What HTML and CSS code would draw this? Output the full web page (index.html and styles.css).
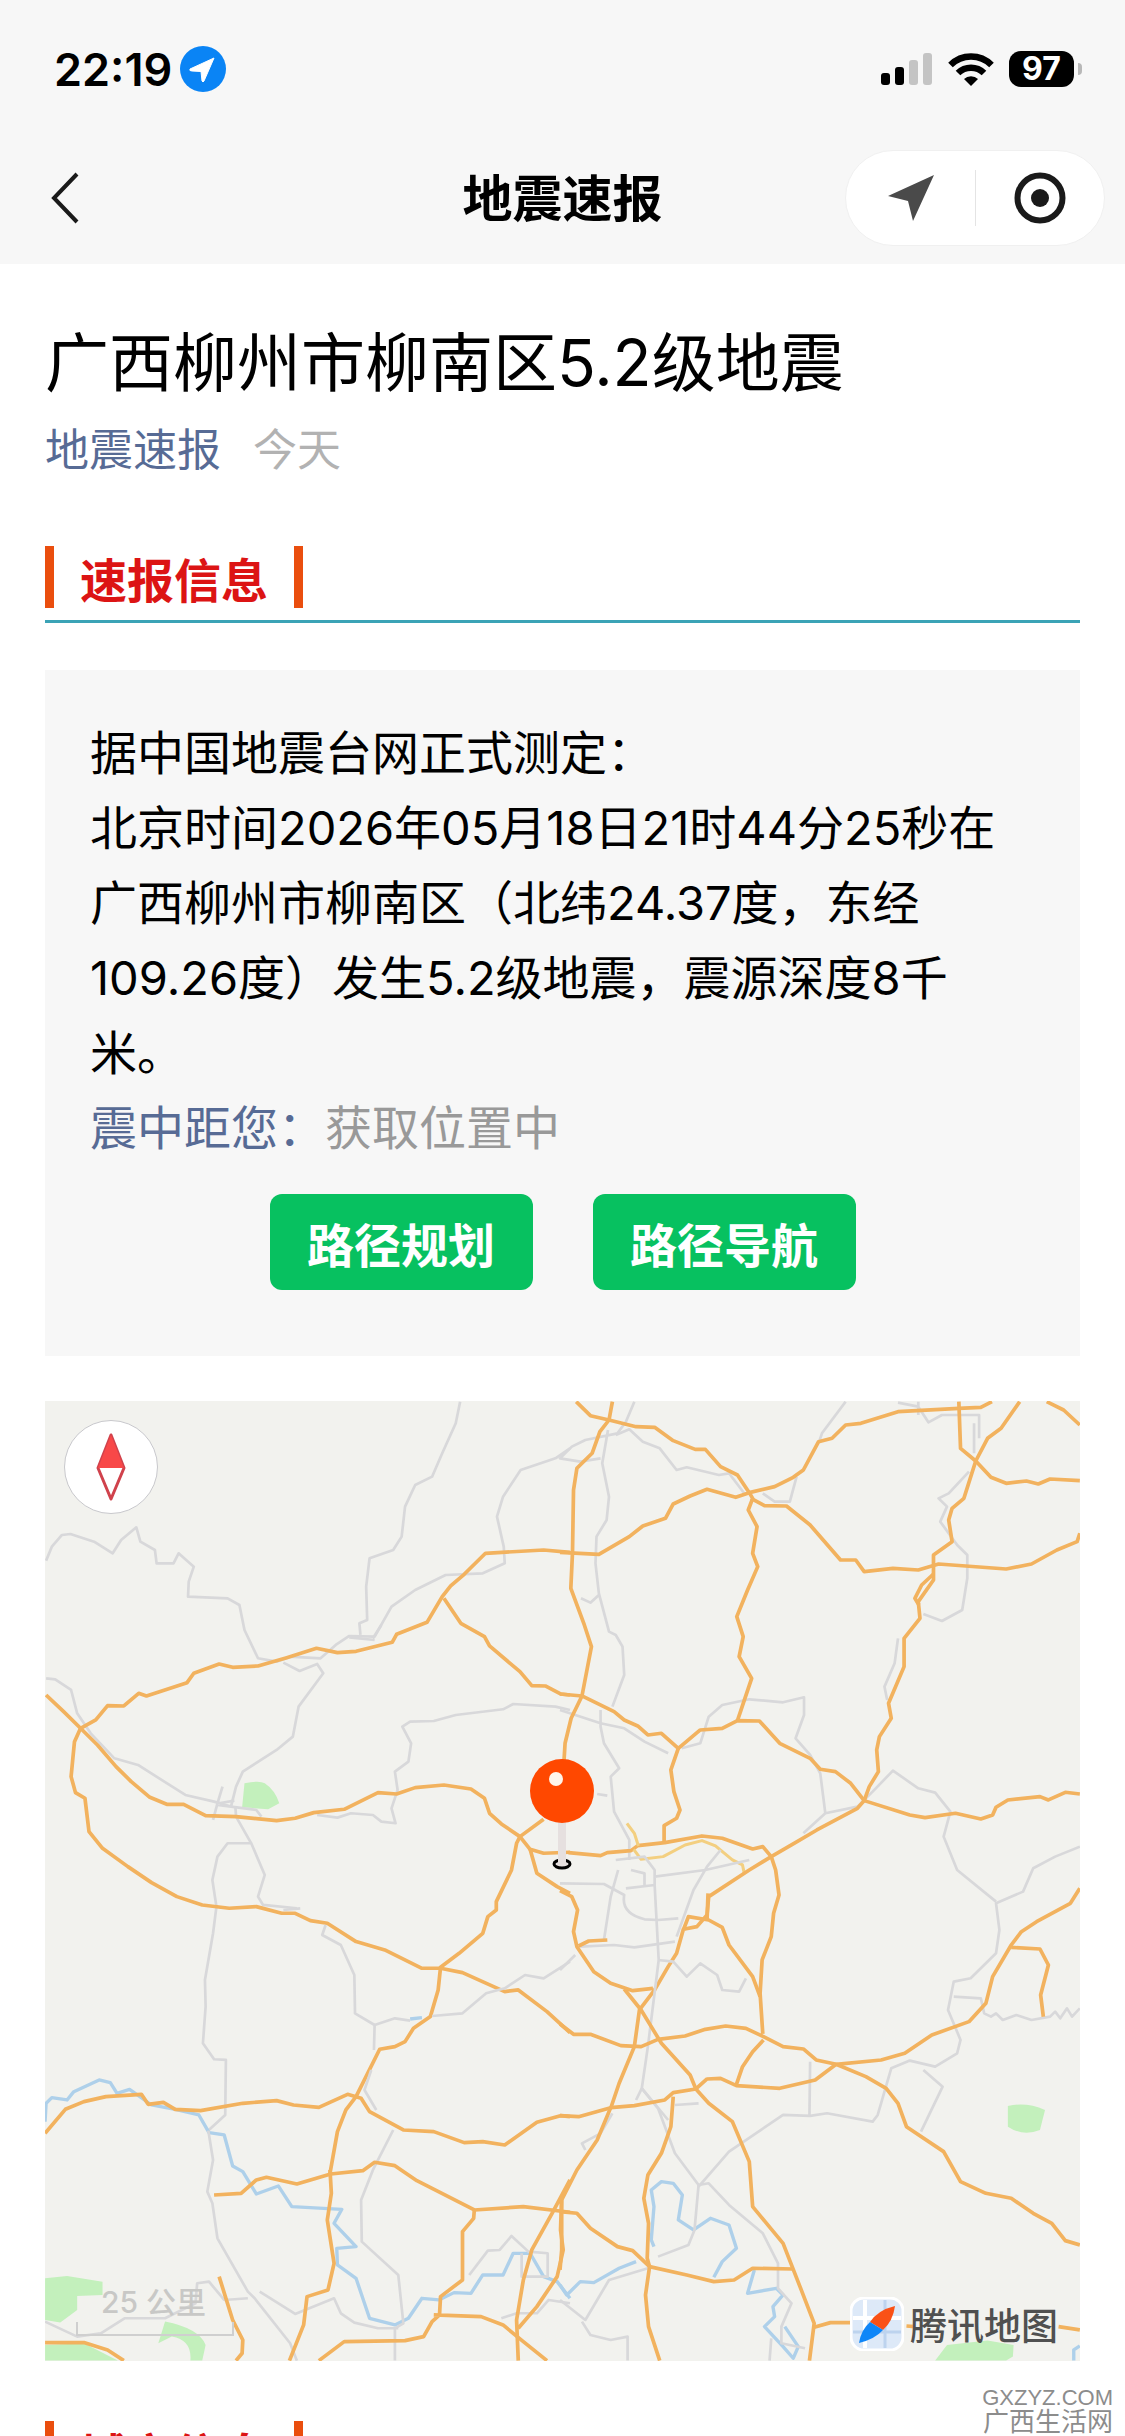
FILE: index.html
```html
<!DOCTYPE html>
<html lang="zh-CN">
<head>
    <meta charset="UTF-8">
    <meta name="viewport" content="width=device-width, initial-scale=1.0">
    <title>地震速报</title>
    <link rel="stylesheet" href="styles.css">
</head>
<body>
    <div class="screen">
        <header class="top">
            <div class="status-bar">
                <div class="status-left">
                    <span class="clock">22:19</span>
                    <svg class="location" viewBox="0 0 46 46">
                        <circle cx="23" cy="23" r="23" fill="#0a84f5"/>
                        <path d="M34 12 L10 23 Q9 25 12 25 L21 25.500 L22 35 Q23 37 24 35 Z" fill="#fff" stroke="#fff" stroke-width="1" stroke-linejoin="round"/>
                    </svg>
                </div>
                <div class="status-right">
                    <svg class="signal" viewBox="0 0 52 33">
                        <rect x="0" y="20" width="9" height="12" rx="3"/>
                        <rect x="14" y="14" width="9" height="18" rx="3"/>
                        <rect x="28" y="7" width="9" height="25" rx="3" fill="#c4c4c4"/>
                        <rect x="42" y="0" width="9" height="32" rx="3" fill="#c4c4c4"/>
                    </svg>
                    <svg class="wifi" viewBox="0 0 46 33">
                        <g fill="none" stroke="#000" stroke-width="6.500">
                            <path d="M2.500 12 A29 29 0 0 1 43.500 12"/>
                            <path d="M10 20 A18.500 18.500 0 0 1 36 20"/>
                        </g>
                        <path d="M16 26 A10 10 0 0 1 30 26 L23 33 Z"/>
                    </svg>
                    <div class="battery"><span>97</span></div>
                </div>
            </div>
            <nav class="nav-bar">
                <button class="back" aria-label="返回">
                    <svg viewBox="0 0 28 52"><path d="M26 2 L3 26 L26 50" fill="none" stroke="#1a1a1a" stroke-width="4"/></svg>
                </button>
                <h1 class="nav-title">地震速报</h1>
                <div class="capsule">
                    <button aria-label="定位">
                        <svg class="arrow" viewBox="0 0 48 48"><path d="M47 1 L1 22 L21 27 L26 47 Z" fill="#4a4a4a"/></svg>
                    </button>
                    <button aria-label="关闭">
                        <svg class="target" viewBox="0 0 52 52">
                            <circle cx="26" cy="26" r="22.500" fill="none" stroke="#1a1a1a" stroke-width="6"/>
                            <circle cx="26" cy="26" r="9" fill="#1a1a1a"/>
                        </svg>
                    </button>
                </div>
            </nav>
        </header>

        <main class="article">
            <h2 class="title">广西柳州市柳南区5.2级地震</h2>
            <div class="meta">
                <a href="#">地震速报</a>
                <span>今天</span>
            </div>

            <h3 class="section-title"><span>速报信息</span></h3>
            <section class="info">
                <p>据中国地震台网正式测定：</p>
                <p>北京时间2026年05月18日21时44分25秒在广西柳州市柳南区（北纬24.37度，东经109.26度）发生5.2级地震，震源深度8千米。</p>
                <p class="distance">震中距您：<span>获取位置中</span></p>
                <div class="actions">
                    <button>路径规划</button>
                    <button>路径导航</button>
                </div>
            </section>

            <section class="map">
                <svg class="map-canvas" viewBox="0 0 1035 960">
                    <!-- north west -->
                    <g transform="translate(-5 -11) scale(.338 .3333)">
                        <path class="park" d="M605 1180 Q650 1170 665 1180 Q695 1200 708 1240 L675 1258 L598 1252 Z"/>
                        <g class="minor">
                            <path d="M18 512 L35 470 L65 435 L90 432 L160 455 L215 490 L240 450 L285 412 L297 455 L340 480 L345 520 L395 520 L410 490 L455 530 L440 575 L438 620 L555 625 L590 645 L605 720 L645 805 L700 815 L740 800 L830 805 L875 765 L915 738 L990 740 L1040 650 L1110 600 L1200 555 L1310 550 L1375 520 L1372 470 L1352 380 L1370 320 L1422 240 L1525 205 L1568 175"/>
                            <path d="M1243 35 L1230 100 L1190 190 L1160 260 L1110 285 L1080 350 L1070 440 L1045 480 L975 505 L965 590 L968 690 L945 700 L948 735"/>
                            <path d="M990 750 L915 742 M985 745 L1010 705"/>
                            <path d="M720 818 L768 843 L820 822 L838 850 L765 950 L748 1040 L700 1080 L600 1145 L580 1190 L565 1250 L525 1245 M18 865 L45 868 L92 900 L110 970 L150 1030 L220 1105 L290 1125 L430 1215 L515 1235 L565 1250 L640 1260 L655 1280"/>
                            <path d="M540 1190 L525 1240 L512 1290 M530 1240 L575 1232 M580 1280 L625 1360 L555 1360 L525 1400 L510 1470 L522 1550 L512 1630 L488 1770 L490 1850 L482 1960 L515 2008 L550 2010 L548 2175 L498 2222 M625 1360 L665 1455 L645 1520 L660 1545 L760 1555 M580 1280 L578 1250"/>
                            <path d="M1568 960 L1525 950 L1400 942 L1370 958 L1230 975 L1165 993 L1095 995 L1072 1010 L1098 1060 L1090 1115 L1050 1145 L1058 1200 L1040 1255 L1052 1300 L1010 1295 L985 1275 L920 1270 L880 1283 L820 1275"/>
                        </g>
                        <g class="road">
                            <path d="M18 915 L70 965 L120 1015 L170 1065 L225 1130 L270 1175 L325 1222 L375 1243 L425 1243 L490 1277 L580 1280 L700 1292 L755 1285 L810 1268 L900 1258 L1000 1208 L1055 1212 L1110 1193 L1195 1185 L1275 1197 L1315 1225 L1330 1270 L1365 1302 L1420 1340 L1450 1378 L1490 1390 L1568 1387"/>
                            <path d="M120 1015 L165 990 L200 947 L248 948 L292 910 L315 918 L435 878 L455 850 L530 822 L570 832 L645 828 L730 803 L818 775 L880 788 L935 784 L1042 757 L1055 733 L1145 697 L1190 620 L1215 588 L1255 553 L1318 490 L1490 480 L1568 487"/>
                            <path d="M1195 625 L1245 700 L1315 740 L1330 768 L1420 845 L1455 887 L1495 888 L1540 912 L1568 915"/>
                            <path d="M120 1015 L102 1055 L92 1160 L105 1208 L133 1225 L145 1325 L185 1375 L260 1430 L330 1478 L405 1520 L480 1545 L560 1555 L640 1550 L715 1570 L755 1570 L800 1592 L850 1600 L935 1655 L1020 1680 L1130 1735 L1185 1735 L1250 1748 L1375 1805 L1415 1800 L1500 1865 L1568 1928"/>
                            <path d="M1490 1288 L1420 1340 L1410 1360 L1395 1440 L1350 1535 L1350 1560 L1325 1580 L1310 1630 L1240 1690 L1185 1732 L1178 1800 L1155 1880 L1105 1915 L1080 1955 L1050 1970 L1005 1978 L935 2120 L905 2160 L880 2225 L858 2350"/>
                            <path d="M1450 1378 L1470 1450 L1530 1490 L1568 1510"/>
                        </g>
                    </g>
                    <!-- north east -->
                    <g transform="translate(515 -11) scale(.338 .3333)">
                        <g class="minor">
                            <path d="M220 35 L195 95 L170 130 L75 150 L35 170 L0 205 L60 215 L120 205 M142 120 L125 220 L145 320 L138 390 L108 440 L105 520 L115 610 L145 725 L165 735 L185 770 L190 855 L155 950 M115 615 L90 638 L62 625"/>
                            <path d="M165 135 L205 118 L245 155 L295 175 L345 240 L375 232 L470 255 L500 250 L545 310 M600 310 L635 335 L680 335 L700 260 M845 35 L775 130 L765 160"/>
                            <path d="M1000 38 L1060 50 L1090 97 L1130 75 L1240 75 L1240 145 M1225 100 L1225 190 M1060 35 L1060 75 M1210 245 L1150 310 L1120 325 L1145 350 L1125 395 L1175 465 L1205 495 L1205 565 L1190 660 L1130 693 L1075 672 M1000 745 L990 820 L960 890 L968 930"/>
                            <path d="M0 960 L120 1000 L190 1015 L250 1055 L320 1090 M120 960 L120 1010 L130 1060 L175 1135 L150 1160 L160 1265 L205 1350 L205 1410 M110 1212 L140 1217"/>
                            <path d="M360 1075 L415 1060 L440 980 L480 945 L560 928 L660 937 L722 922 L722 975 L697 1045 L740 1095 L770 1150 L785 1270 L720 1330 M785 1270 L880 1250 L925 1205 L985 1142 L1060 1195 L1110 1208 L1155 1265 L1135 1340 L1175 1440 L1290 1535 M1538 1370 L1465 1400 L1400 1435 L1370 1505 L1290 1540 L1300 1620 L1290 1690 L1215 1765 L1165 1775 L1148 1860 L1185 1950 L1175 1990 L1110 2030 L1035 2012 L980 2035 L940 2175 L925 2195 L790 2170 L740 2178 L660 2175 L500 2285 L410 2390"/>
                        </g>
                        <g class="road">
                            <path d="M48 35 L90 77 L145 90 L225 110 L280 112 L335 152 L400 178 L430 178 L475 230 L525 255 L560 308 L520 322 L435 298 L385 318 L335 342 L312 385 L245 408 L205 440 L115 493 L0 487"/>
                            <path d="M155 35 L145 90 L118 125 L95 190 L50 235 L40 300 L37 487 L32 595 L72 705 L93 770 L65 918 L33 985 L15 1060 L12 1110"/>
                            <path d="M560 308 L570 325 L557 360 L583 410 L570 490 L585 530 L555 600 L523 680 L542 740 L530 800 L567 865 L525 992"/>
                            <path d="M560 308 L635 290 L690 262 L720 240 L765 155 L805 145 L845 105 L890 100 L1000 65 L1180 55 L1245 52 L1278 35"/>
                            <path d="M565 325 L605 347 L670 348 L740 405 L830 510 L875 510 L900 545 L985 535 L1060 540 L1120 522 L1320 537 L1395 522 L1470 480 L1530 455 L1538 430"/>
                            <path d="M1180 35 L1185 175 L1230 213 L1275 262 L1320 280 L1380 273 L1415 282 L1450 267 L1538 272"/>
                            <path d="M1360 35 L1305 115 L1265 145 L1230 213 L1195 325 L1160 355 L1150 390 L1160 455 L1105 495 L1105 570 L1060 635 L1065 685 L1018 745 L1018 830 L972 940 L980 985 L945 1040 L937 1080 L942 1145 L915 1190 L900 1232"/>
                            <path d="M1105 552 L1070 585 L1050 625 L1062 645 M1440 35 L1490 60 L1538 105"/>
                            <path d="M0 912 L65 918 L160 965 L190 990 L230 1008 L260 1035 L300 1030 L350 1075 L415 1020 L480 1015 L525 992 L590 993 L650 1060 L740 1105 L770 1138 L815 1145 L860 1180 L900 1232 L1035 1275 L1080 1283 L1170 1270 L1245 1287 L1280 1275 L1290 1252 L1325 1230 L1420 1220 L1445 1230 L1495 1207 L1538 1212"/>
                            <path d="M350 1075 L328 1140 L337 1205 L355 1260 L345 1285 L308 1307 L308 1358"/>
                            <path d="M25 1388 L120 1397 L140 1388 L210 1382 L230 1367 L310 1358 L420 1338 L480 1345 L570 1377 L600 1370 L625 1400 L690 1362 L760 1320 L880 1255 L900 1232 M625 1400 L638 1440 L648 1515 L632 1570 L625 1640 L598 1710 L592 1810 L600 1932"/>
                        </g>
                        <path class="road-light" d="M198 1300 L220 1330 L232 1368 M218 1378 L240 1408 L305 1400 L370 1365 L420 1352 L460 1368 L510 1410 L540 1425 L545 1450"/>
                        <path class="road" d="M625 1400 L560 1440 L440 1520 L435 1575 L405 1610 L365 1618 L345 1690 L320 1730 L280 1800 L235 1860 L220 1970 L175 2080 L150 2155"/>
                    </g>
                    <!-- south west -->
                    <g transform="translate(-5 469) scale(.338 .3333)">
                        <path class="park" d="M15 1225 L80 1218 L185 1235 L185 1275 L110 1278 L110 1320 L60 1358 L15 1350 Z M15 1425 L130 1420 L230 1472 L15 1472 Z M370 1355 Q470 1375 490 1425 L480 1472 L445 1472 Q450 1410 390 1400 L350 1420 Z"/>
                        <path class="water" d="M15 755 L18 700 L35 683 L80 690 L100 665 L175 630 L208 638 L228 670 L265 658 L330 705 L400 718 L470 735 L500 788 L545 795 L570 888 L600 905 L640 972 L705 948 L745 1010 L893 1018 L870 1060 L935 1130 L878 1135 L880 1185 L935 1225 L975 1345 L1050 1365 L1090 1345 L1130 1285 L1180 1290 L1225 1268 L1275 1270 L1310 1215 L1370 1215 L1400 1150 L1450 1150 L1490 1220 L1530 1235 L1568 1285 M1095 447 L1130 443"/>
                        <g class="minor">
                            <path d="M720 120 L770 115 M845 165 L835 195 L890 225 L930 315 L932 430 L990 465 L988 540 M990 465 L1050 445 L1095 452 M1160 438 L1250 430 L1320 370 L1375 355 L1435 315 L1490 325 L1568 275 M980 600 L960 660 L995 720 M1045 780 L985 900 L950 990 L952 1115 L1060 1215 L1075 1360 L1050 1375 L1050 1472"/>
                            <path d="M498 782 L512 870 L495 965 L510 1000 L525 1105 L615 1265 L635 1285 L740 1420 L760 1472 M615 1285 L545 1290 L500 1235 L465 1240 L460 1300 L370 1345 L250 1345 L180 1390 L110 1400 L15 1355 M650 1265 L755 1332 L870 1285 L890 1330 L930 1358 L1000 1375 L1060 1375"/>
                            <path d="M1270 1215 L1325 1142 L1360 1140 L1395 1098 L1445 1145 L1502 1150 L1502 1220 L1425 1220 L1425 1150 M1365 1345 L1410 1330 L1470 1330 L1505 1290 L1568 1300"/>
                        </g>
                        <g class="road">
                            <path d="M15 790 L75 718 L130 695 L195 680 L300 673 L320 703 L365 697 L400 718 L475 722 L600 700 L700 692 L750 705 L825 712 L910 673 L950 685 L975 725 L1075 780 L1165 785 L1255 818 L1310 815 L1375 825 L1470 757 L1540 737 L1568 740"/>
                            <path d="M515 975 L595 970 L640 930 L670 922 L760 942 L860 912 L955 902 L990 877 L1050 887 L1115 932 L1285 1020 L1430 1010 L1568 1027"/>
                            <path d="M858 900 L862 970 L850 1050 L870 1180 L852 1260 L790 1280 L780 1365 L738 1472"/>
                            <path d="M1285 1020 L1283 1045 L1250 1085 L1250 1230 L1185 1280 L1182 1335 L1160 1355 L1135 1400 L1080 1412 L900 1415 L825 1472 M1165 1335 L1305 1340 L1370 1365 L1430 1415 L1500 1472"/>
                            <path d="M530 1220 L570 1350 L600 1410 L598 1450 L580 1472 M15 1418 L130 1418 L200 1440 L248 1472"/>
                            <path d="M1568 930 L1515 1030 L1455 1140 L1430 1230 L1410 1350 L1415 1472 M1543 990 L1540 1080 L1548 1140 L1530 1220 L1470 1310 L1415 1375"/>
                        </g>
                    </g>
                    <!-- south east -->
                    <g transform="translate(515 469) scale(.338 .3333)">
                        <path class="park" d="M1325 708 Q1380 695 1435 720 L1420 780 Q1370 800 1325 770 Z M1110 1472 L1145 1425 L1265 1412 L1342 1425 L1340 1460 L1320 1472 Z"/>
                        <path class="water" d="M278 1130 L270 1110 L278 1010 L270 960 L300 935 L335 940 L362 975 L350 1050 L395 1080 L445 1045 L500 1065 L522 1135 L480 1175 L455 1222 M0 1245 L20 1275 L60 1235 L100 1238 L175 1195 L225 1175 M575 1200 L555 1270 L640 1255 L660 1275 L630 1310 L635 1340 L605 1370 L660 1430 L690 1465 L705 1430 L665 1370 M1538 1428 L1520 1440 L1520 1472"/>
                        <g class="minor">
                            <path d="M0 40 L130 42 L190 75 Q180 130 250 148 L290 150 L350 145 M172 0 L150 80 L130 210 M165 -30 L250 -40 L280 0 L280 45 L195 55 M210 0 L250 10 L250 45 M280 20 L430 0 L560 -30 M475 -60 L435 -10 L395 60 L345 200 M280 45 L292 270 L260 530 L242 655 L290 715 L340 850 L410 945 L440 940 L500 1005 L600 1090 L645 1180 L645 1255 L685 1300 L655 1370 L655 1420 L725 1435"/>
                            <path d="M60 230 L160 225 L220 232 L340 215 M45 255 L0 300 M290 270 L335 275 L375 320 L415 280 L465 315 L480 360 L530 365 L550 325 M242 655 L320 750 M340 705 L410 700 M242 655 L225 690 M155 730 L120 790 L65 820 L75 840 M740 575 L738 740 M410 945 L398 1080 L380 1125 L290 1160 M1165 380 L1245 385 L1255 430 L1275 440 L1290 430 L1310 450 L1350 435 L1395 450 L1450 440 L1465 425 L1480 445 L1500 415 L1515 440 L1538 415"/>
                            <path d="M1075 600 L1132 650 L1068 785"/>
                            <path d="M260 1195 L145 1230 L75 1350 L0 1290 M65 1355 L90 1395 L150 1410 L200 1400 L200 1472 M620 1472 L625 1405"/>
                        </g>
                        <g class="road">
                            <path d="M0 62 L35 80 L52 120 L40 185 L50 230 L100 305 L150 340 L215 362 L275 355"/>
                            <path d="M190 357 L240 420 L300 520 L385 615 L402 657 L440 700 L510 755 L560 875 L570 1010 L660 1120 L710 1250 L752 1360 L738 1472"/>
                            <path d="M55 228 L85 213 L140 210 M365 180 L380 140 L440 150 L480 172 L500 225 L570 320 L592 380 M435 150 L438 70"/>
                            <path d="M0 462 L40 493 L90 493 L180 527 L240 530 L290 508 L370 498 L430 478 L490 468 L550 475 L602 500 L660 530 L720 537 L758 570 L817 583"/>
                            <path d="M602 510 L570 545 L540 590 L522 643"/>
                            <path d="M0 737 L55 740 L150 713 L220 707 L310 690 L335 668 L402 657 L435 627 L475 625 L522 647 L650 655 L755 630 L817 583 L950 570 L1020 550 L1100 495 L1210 455 L1260 400 L1280 320 L1335 225 L1365 185 L1410 155 L1510 100 L1538 55"/>
                            <path d="M1335 232 L1420 237 L1445 285 L1422 375 L1430 440 M817 583 L905 620 L965 655 L1000 700 L1025 770 L1135 845 L1185 935 L1260 970 L1335 985 L1400 1030 L1455 1060 L1495 1112 L1538 1125"/>
                            <path d="M150 713 L110 810 L50 900 L0 1000 M5 990 L5 1140 L0 1200 M335 680 L328 770 L300 850 L260 915 L248 985 L262 1060 L258 1165 L265 1190 L253 1275 L262 1370 L295 1472"/>
                            <path d="M0 1025 L50 1030 L90 1075 L170 1130 L215 1142 L265 1190 L375 1215 L455 1235 L515 1230 L570 1195 L690 1197 M752 1372 L800 1358 L870 1358 M1475 1370 L1538 1380 M1025 1368 L1050 1370"/>
                        </g>
                    </g>
                    <!-- epicentre pin -->
                    <ellipse cx="517" cy="463" rx="8" ry="4" fill="#e6e0df" stroke="#000" stroke-width="3"/>
                    <rect x="513" y="420" width="8" height="42" fill="#e6e0df"/>
                    <circle cx="517" cy="390" r="32" fill="#ff4800"/>
                    <circle cx="511" cy="378" r="7" fill="#fff5ea"/>
                </svg>
                <button class="compass" aria-label="指北">
                    <svg viewBox="0 0 30 70">
                        <path d="M15 3 L28 36 L15 67 L2 36 Z" fill="#fff" stroke="#d0424c" stroke-width="3" stroke-linejoin="round"/>
                        <path d="M15 3 L28 36 H2 Z" fill="#f84848"/>
                    </svg>
                </button>
                <div class="scale">25 公里</div>
                <div class="brand">
                    <svg viewBox="0 0 54 54">
                        <rect x="1" y="1" width="52" height="52" rx="13" fill="#dde9f8" stroke="#fff" stroke-width="3"/>
                        <path d="M3 21 H51 M15 3 V51" stroke="#fff" stroke-width="4"/>
                        <path d="M3 35 H51 M35 3 V51" stroke="#bdd3ee" stroke-width="3"/>
                        <path d="M45 9 Q28 13 20 25 L33 33 Q43 24 45 9 Z" fill="#fa5116"/>
                        <path d="M9 46 Q11 33 20 25 L33 33 Q25 42 9 46 Z" fill="#0f86f8"/>
                    </svg>
                    <span>腾讯地图</span>
                </div>
            </section>

            <h3 class="section-title next"><span>城市信息</span></h3>
        </main>

        <div class="watermark">
            <div>GXZYZ.COM</div>
            <div>广西生活网</div>
        </div>
    </div>
</body>
</html>
```
FILE: styles.css
```css
* {
    box-sizing: border-box;
}
body {
    margin: 0;
    background-color: #ffffff;
    color: #000000;
    font-family: Inter, "Noto Sans CJK SC", sans-serif;
}
h1, h2, h3, p {
    margin: 0;
}
button {
    padding: 0;
    border: none;
    background: none;
    font-family: inherit;
}
svg {
    display: block;
}
.screen {
    position: relative;
    height: 100vh;
    overflow: hidden;
}

/* header */
.top {
    height: 264px;
    background-color: #f7f7f7;
}
.status-bar {
    display: flex;
    justify-content: space-between;
    align-items: center;
    height: 138px;
    padding: 0 43px 0 54px;
}
.status-left, .status-right {
    display: flex;
    align-items: center;
}
.status-left {
    gap: 8px;
}
.status-right {
    gap: 15px;
}
.clock {
    font-size: 45px;
    font-weight: 600;
}
.location {
    width: 46px;
}
.signal {
    width: 52px;
}
.wifi {
    width: 46px;
}
.battery {
    display: flex;
    align-items: center;
}
.battery span {
    width: 65px;
    border-radius: 12px;
    background-color: #000000;
    color: #ffffff;
    font-size: 32px;
    font-weight: 700;
    line-height: 36px;
    text-align: center;
}
.battery::after {
    content: "";
    width: 4px;
    height: 12px;
    margin-left: 4px;
    border-radius: 0 4px 4px 0;
    background-color: #b8b8b8;
}
.nav-bar {
    display: grid;
    grid-template-columns: 1fr auto 1fr;
    align-items: center;
    height: 120px;
    padding: 0 20px;
}
.back {
    padding-left: 31px;
}
.back svg {
    width: 28px;
}
.nav-title {
    padding-top: 2px;
    font-size: 50px;
    font-weight: 700;
    line-height: 72px;
}
.capsule {
    display: flex;
    justify-self: end;
    width: 260px;
    height: 96px;
    border: 1px solid #f0f0f0;
    border-radius: 48px;
    background-color: #ffffff;
}
.capsule button {
    display: flex;
    flex: 1;
    align-items: center;
    justify-content: center;
}
.capsule button + button::before {
    content: "";
    width: 1px;
    height: 56px;
    margin-right: 38px;
    background-color: #e4e4e4;
}
.capsule button + button {
    justify-content: flex-start;
}
.arrow {
    width: 48px;
}
.target {
    width: 52px;
}

/* article */
.article {
    padding: 54px 45px 0;
}
.title {
    font-size: 64px;
    font-weight: 400;
    line-height: 90px;
}
.meta {
    display: flex;
    gap: 32px;
    margin-top: 12px;
    font-size: 44px;
    line-height: 60px;
}
.meta a {
    color: #576b95;
    text-decoration: none;
}
.meta span {
    color: #b2b2b2;
}
.section-title {
    display: flex;
    margin: 66px 0 47px;
    padding-bottom: 12px;
    border-bottom: 3px solid #3ba3b6;
    color: #dc1414;
    font-size: 47px;
    line-height: 62px;
}
.section-title span {
    height: 62px;
    padding: 4px 26px 0;
    border: solid #ea4e0e;
    border-width: 0 9px;
}
.section-title.next {
    margin-top: 60px;
}
.info {
    padding: 45px 45px 66px;
    background-color: #f7f7f7;
    font-size: 47px;
    line-height: 75px;
}
.distance {
    color: #576b95;
}
.distance span {
    color: #999999;
}
.actions {
    display: flex;
    justify-content: center;
    gap: 60px;
    margin-top: 29px;
}
.actions button {
    width: 263px;
    height: 96px;
    border-radius: 12px;
    background-color: #07c160;
    color: #ffffff;
    font-size: 47px;
    font-weight: 700;
}

/* map */
.map {
    position: relative;
    margin-top: 45px;
    background-color: #f2f2ee;
}
.map-canvas {
    width: 100%;
}
.minor, .road, .road-light, .water {
    fill: none;
    stroke-linejoin: round;
}
.minor {
    stroke: #d8d8da;
    stroke-width: 8;
}
.road {
    stroke: #f2b25e;
    stroke-width: 11;
}
.road-light {
    stroke: #f3cf80;
    stroke-width: 9;
}
.water {
    stroke: #aed0ea;
    stroke-width: 10;
}
.park {
    fill: #c3f0bc;
}
.compass {
    position: absolute;
    top: 19px;
    left: 19px;
    display: flex;
    align-items: center;
    justify-content: center;
    width: 94px;
    height: 94px;
    border: 1px solid #c8c8cc;
    border-radius: 50%;
    background-color: #ffffff;
}
.compass svg {
    width: 30px;
}
.scale {
    position: absolute;
    bottom: 25px;
    left: 31px;
    width: 158px;
    height: 54px;
    padding-left: 25px;
    color: #c8c8c6;
    font-size: 30px;
    font-weight: 500;
    line-height: 40px;
    border-bottom: 2px solid #cfcfcf;
}
.scale::before, .scale::after {
    content: "";
    position: absolute;
    bottom: 0;
    left: 0;
    width: 2px;
    height: 12px;
    background-color: #cfcfcf;
}
.scale::after {
    right: 0;
    left: auto;
}
.brand {
    position: absolute;
    right: 22px;
    bottom: 10px;
    display: flex;
    align-items: center;
    gap: 6px;
    color: #505050;
    font-size: 37px;
    font-weight: 500;
}
.brand svg {
    width: 54px;
}

.watermark {
    position: absolute;
    right: 12px;
    bottom: 2px;
    color: #8c8c8c;
    font-family: "Liberation Sans", "Noto Sans CJK SC", sans-serif;
    font-size: 22px;
    line-height: 24px;
    text-align: right;
}
.watermark div + div {
    font-size: 26px;
}
```
